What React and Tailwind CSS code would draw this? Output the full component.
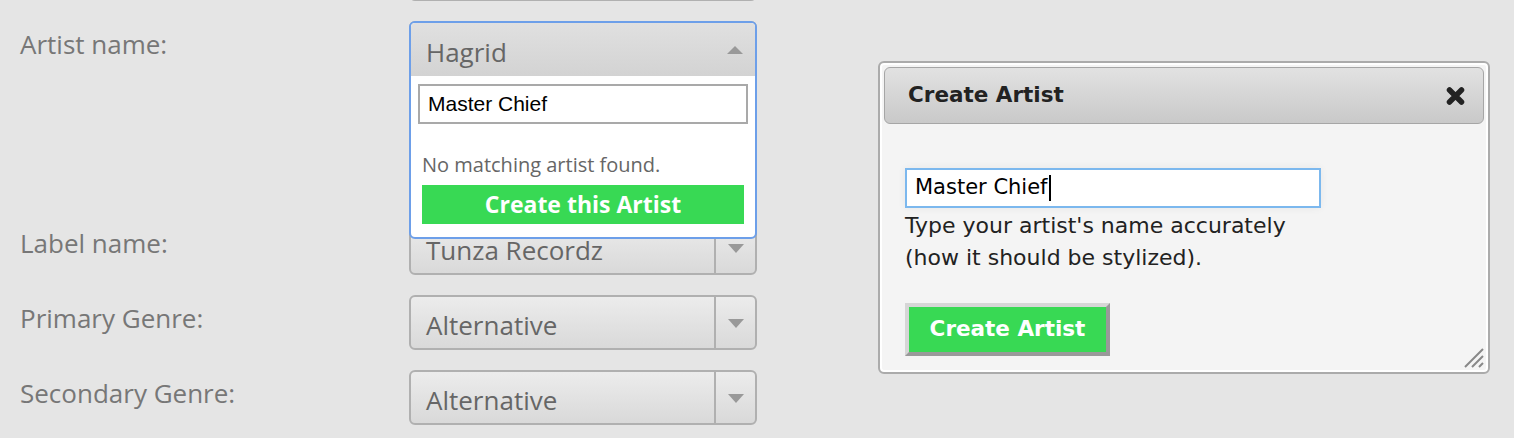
import { useState } from 'react';

function DownArrow() {
  return (
    <svg width="16" height="9" viewBox="0 0 16 9">
      <path d="M0 0 L16 0 L8 9 Z" fill="#999" />
    </svg>
  );
}

function UpArrow() {
  return (
    <svg width="16" height="8" viewBox="0 0 16 8">
      <path d="M0 8 L16 8 L8 0 Z" fill="#999" />
    </svg>
  );
}

function Select({ value }) {
  return (
    <div className="flex h-[55px] w-[348px] rounded-[6px] border-2 border-[#b0b0b0] bg-gradient-to-b from-[#ececec] to-[#d9d9d9]">
      <div className="flex flex-1 items-center pl-[15px] pt-[4px] text-[26px] leading-[36px] text-[#666]">{value}</div>
      <div className="flex w-[41px] items-center justify-center border-l-2 border-[#b0b0b0] pt-[2px]">
        <DownArrow />
      </div>
    </div>
  );
}

function ArtistDropdown() {
  const [query, setQuery] = useState('Master Chief');
  return (
    <div className="absolute left-0 top-0 z-10 h-[218px] w-[348px] overflow-hidden rounded-[6px] border-2 border-[#6d9fe9] bg-white">
      <div className="flex h-[53px] items-center justify-between bg-gradient-to-b from-[#e0e0e0] to-[#d3d3d3] pl-[15px] pr-[12px]">
        <span className="pt-[4px] text-[26px] leading-[36px] text-[#666]">Hagrid</span>
        <UpArrow />
      </div>
      <div className="px-[7px] pt-[8px]">
        <input
          value={query}
          onChange={(e) => setQuery(e.target.value)}
          className="h-[40px] w-[330px] border-2 border-[#a9a9a9] bg-white pl-[8px] font-['Liberation_Sans',Arial,sans-serif] text-[21px] text-black outline-none"
        />
        <div className="px-[4px]">
          <p className="mt-[27px] text-[20px] leading-[28px] text-[#666]">No matching artist found.</p>
          <button className="mt-[6px] h-[39px] w-[322px] bg-[#38d954] text-[23px] font-bold leading-[39px] text-white">
            Create this Artist
          </button>
        </div>
      </div>
    </div>
  );
}

function Row({ label, children, height }) {
  return (
    <div className={`flex ${height}`}>
      <div className="w-[409px] shrink-0 pl-[20px] pt-[5px] text-[26px] leading-[36px] text-[#777]">{label}</div>
      <div className="relative">{children}</div>
    </div>
  );
}

function ResizeHandle() {
  return (
    <svg width="22" height="22" viewBox="0 0 22 22" className="absolute bottom-[4px] right-[4px]">
      <path d="M21 3 L3 21 M21 10 L10 21 M21 17 L17 21" stroke="#888" strokeWidth="2" />
    </svg>
  );
}

function CreateArtistDialog() {
  return (
    <div className="relative ml-[121px] mt-[61px] h-[313px] w-[612px] shrink-0 rounded-[6px] border-2 border-[#ababab] bg-[#f4f4f4] p-[4px] font-['DejaVu_Sans',Verdana,sans-serif] shadow-[inset_0_0_0_2px_#fff]">
      <div className="flex h-[57px] items-center justify-between rounded-[6px] border border-[#a6a6a6] bg-gradient-to-b from-[#e2e2e2] to-[#c9c9c9] pl-[23px] pr-[18px]">
        <span className="text-[21.5px] font-bold text-[#222]">Create Artist</span>
        <svg width="19" height="18" viewBox="0 0 19 18">
          <path d="M3.5 3 L15.5 15 M15.5 3 L3.5 15" stroke="#222" strokeWidth="5.5" strokeLinecap="round" />
        </svg>
      </div>
      <div className="pl-[21px] pt-[44px]">
        <div
          role="textbox"
          className="flex h-[40px] w-[416px] items-center border-2 border-[#7cb8ee] bg-white pl-[8px] text-[21px] text-black shadow-[0_0_8px_rgba(0,0,0,0.06)]"
        >
          <span>Master Chief</span>
          <span className="ml-[1px] h-[26px] w-[2px] bg-black" />
        </div>
        <p className="mt-[2px] text-[22px] leading-[32px] text-[#222]">
          Type your artist's name accurately
          <br />
          (how it should be stylized).
        </p>
        <button className="mt-[29px] h-[53px] w-[205px] border-4 border-b-[#999] border-l-[#d6d6d6] border-r-[#999] border-t-[#d6d6d6] bg-[#38d954] text-[21.5px] font-bold text-white">
          Create Artist
        </button>
      </div>
      <ResizeHandle />
    </div>
  );
}

export default function App() {
  return (
    <div className="flex h-[438px] w-[1514px] overflow-hidden bg-[#e5e5e5] font-['Open_Sans',sans-serif]">
      <div className="mt-[-54px] flex shrink-0 flex-col gap-[20px]">
        <Row label="" height="h-[55px]">
          <Select value="" />
        </Row>
        <Row label="Artist name:" height="h-[179px]">
          <Select value="Hagrid" />
          <ArtistDropdown />
        </Row>
        <Row label="Label name:" height="h-[55px]">
          <Select value="Tunza Recordz" />
        </Row>
        <Row label="Primary Genre:" height="h-[55px]">
          <Select value="Alternative" />
        </Row>
        <Row label="Secondary Genre:" height="h-[55px]">
          <Select value="Alternative" />
        </Row>
      </div>
      <CreateArtistDialog />
    </div>
  );
}
